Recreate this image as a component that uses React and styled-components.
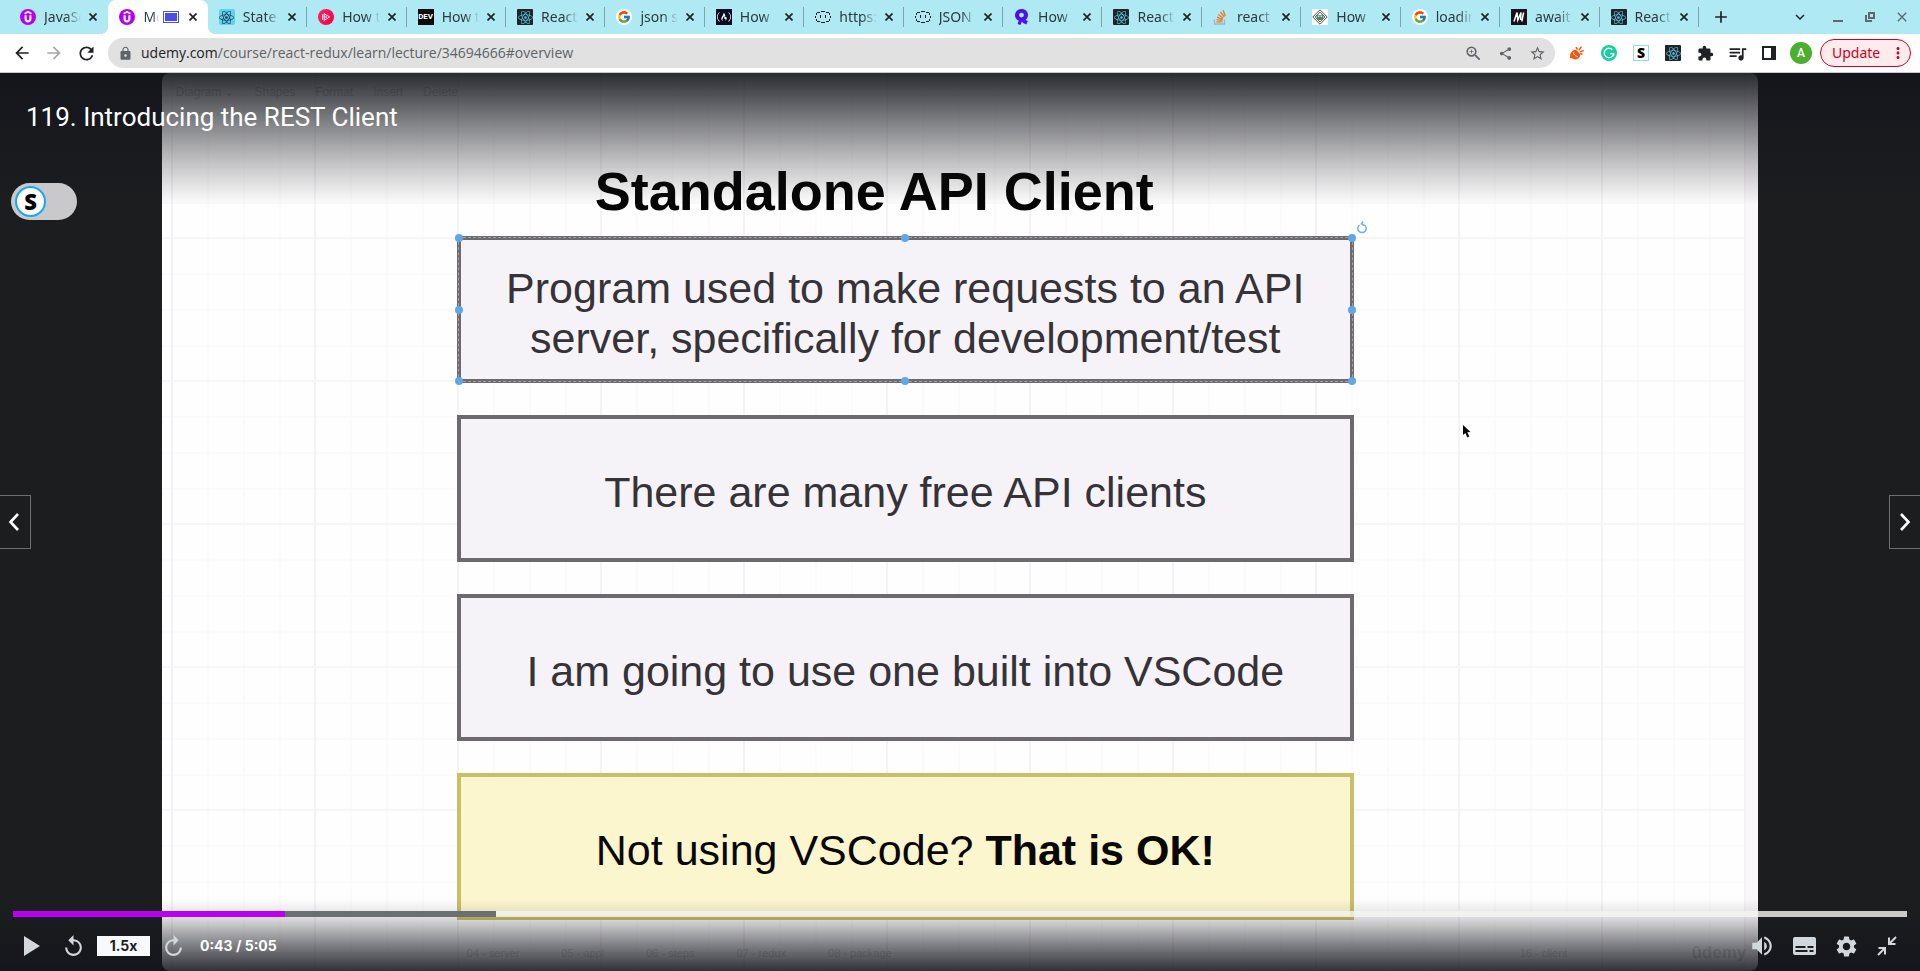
import React from "react";
import styled, { createGlobalStyle, css } from "styled-components";
import {
  MdArrowBack,
  MdArrowForward,
  MdRefresh,
  MdLock,
  MdZoomIn,
  MdShare,
  MdStarBorder,
  MdExtension,
  MdQueueMusic,
  MdClose,
  MdAdd,
  MdExpandMore,
  MdMoreVert,
  MdReplay,
  MdVolumeUp,
  MdSettings,
} from "react-icons/md";
import { FcGoogle } from "react-icons/fc";
import { FaReact, FaFreeCodeCamp } from "react-icons/fa";

const UI_FONT = '"Noto Sans", "Open Sans", sans-serif';
const SLIDE_FONT = '"Liberation Sans", Arial, sans-serif';

const GlobalStyle = createGlobalStyle`
  *, *::before, *::after { box-sizing: border-box; }
  body { margin: 0; background: #1c1d1f; }
  button { margin: 0; padding: 0; border: 0; background: none; color: inherit; font: inherit; cursor: pointer; }
  svg { display: block; flex: none; }
`;

const Page = styled.div`
  display: flex;
  flex-direction: column;
  height: 100vh;
  overflow: hidden;
  font-family: ${UI_FONT};
`;

/* ---------- browser chrome ---------- */

const TabStrip = styled.nav`
  display: flex;
  align-items: stretch;
  flex: none;
  height: 34px;
  padding-left: 9px;
  background: #aee9f4;
`;

const Tabs = styled.div`
  display: flex;
  flex: 1;
  min-width: 0;
`;

const Tab = styled.div`
  position: relative;
  display: flex;
  align-items: center;
  flex: 1 1 0;
  min-width: 0;
  padding: 0 7px 0 11px;
  color: #2b3a3e;
  ${(p) =>
    p.$divided &&
    css`
      &::after {
        content: "";
        position: absolute;
        right: 0;
        top: 7px;
        width: 1px;
        height: 20px;
        background: #7fa3aa;
      }
    `}
  ${(p) =>
    p.$active &&
    css`
      background: #fff;
      border-radius: 8px 8px 0 0;
      &::before,
      &::after {
        content: "";
        position: absolute;
        bottom: 0;
        width: 8px;
        height: 8px;
      }
      &::before {
        left: -8px;
        background: radial-gradient(circle at 0 0, transparent 8px, #fff 8px);
      }
      &::after {
        right: -8px;
        background: radial-gradient(circle at 100% 0, transparent 8px, #fff 8px);
      }
    `}
`;

const TabLabel = styled.a`
  flex: 1;
  min-width: 0;
  margin: 0 4px 0 8px;
  overflow: hidden;
  white-space: nowrap;
  font-size: 14px;
  line-height: 20px;
  color: inherit;
  text-decoration: none;
  mask-image: linear-gradient(to right, #000 60%, transparent);
`;

const Recording = styled.span`
  flex: none;
  width: 16px;
  height: 12px;
  margin-right: 6px;
  border: 1px solid #4a4df0;
  background: #4a4df0;
  box-shadow: inset 0 0 0 1px #fff;
`;

const IconButton = styled.button`
  display: flex;
  align-items: center;
  justify-content: center;
  flex: none;
  width: ${(p) => p.$w || 32}px;
  height: ${(p) => p.$h || 30}px;
  color: ${(p) => p.$color || "#202124"};
`;

const Favicon = styled.span`
  display: flex;
  align-items: center;
  justify-content: center;
  flex: none;
  width: 16px;
  height: 16px;
  overflow: hidden;
  border-radius: ${(p) => p.$radius || 0}px;
  background: ${(p) => p.$bg || "transparent"};
  color: ${(p) => p.$color || "#fff"};
  font: ${(p) => p.$font || `700 9px/16px "Roboto", sans-serif`};
`;

const StripEnd = styled.div`
  display: flex;
  align-items: center;
  flex: none;
  width: 221px;
  padding: 0 2px 0 6px;
  color: #202124;
`;

const Spacer = styled.div`
  flex: 1;
`;

const Toolbar = styled.header`
  display: flex;
  align-items: center;
  flex: none;
  height: 39px;
  padding: 0 9px 0 6px;
  border-bottom: 1px solid #c9c9cb;
  background: #fff;
`;

const AddressBar = styled.form`
  display: flex;
  align-items: center;
  flex: 1;
  min-width: 0;
  height: 30px;
  margin: 0 6px;
  padding: 0 2px 0 10px;
  border-radius: 15px;
  background: #e1e1e1;
  color: #5f6368;
`;

const Address = styled.label`
  position: relative;
  display: grid;
  align-items: center;
  flex: 1;
  min-width: 0;
  margin-left: 8px;
  font-family: "Open Sans", sans-serif;
  font-size: 14px;
  line-height: 20px;
`;

const AddressText = styled.span`
  grid-area: 1 / 1;
  white-space: nowrap;
  pointer-events: none;
  b {
    font-weight: 400;
    color: #202124;
  }
`;

const AddressInput = styled.input`
  grid-area: 1 / 1;
  width: 100%;
  height: 24px;
  padding: 0;
  border: 0;
  outline: 0;
  background: transparent;
  font: inherit;
  color: inherit;
`;

const Avatar = styled.span`
  width: 22px;
  height: 22px;
  border-radius: 11px;
  background: #4caf2f;
  color: #fff;
  font: 500 12px/22px "Roboto", sans-serif;
  text-align: center;
`;

const UpdateButton = styled.button`
  display: flex;
  align-items: center;
  justify-content: space-between;
  flex: none;
  width: 91px;
  height: 28px;
  margin-left: 3px;
  padding: 0 3px 0 11px;
  border: 1px solid #d0021b;
  border-radius: 14px;
  background: #fdebed;
  color: #d0021b;
  font-size: 14px;
  line-height: 20px;
`;

/* ---------- player ---------- */

const Player = styled.main`
  position: relative;
  display: flex;
  justify-content: center;
  flex: 1;
  min-height: 0;
  overflow: hidden;
  background: #1c1d1f;
`;

const Stage = styled.section`
  position: relative;
  display: flex;
  flex-direction: column;
  height: 100%;
  aspect-ratio: 16 / 9;
  overflow: hidden;
  border-radius: 8px;
  border-right: 12px solid #f9f7fa;
  background-color: #fefefe;
  background-image: linear-gradient(to right, #f5f2f6 2px, transparent 2px),
    linear-gradient(to bottom, #f7f5f8 2px, transparent 2px),
    linear-gradient(
      to right,
      transparent 36px,
      #fcfafc 36px 38px,
      transparent 38px 72px,
      #fcfafc 72px 74px,
      transparent 74px 108px,
      #fcfafc 108px 110px,
      transparent 110px
    ),
    linear-gradient(
      to bottom,
      transparent 36px,
      #fcfafc 36px 38px,
      transparent 38px 72px,
      #fcfafc 72px 74px,
      transparent 74px 108px,
      #fcfafc 108px 110px,
      transparent 110px
    );
  background-size: 143px 143px;
  background-position: 9px 21px;
  font-family: ${SLIDE_FONT};
`;

const EditorMenu = styled.div`
  display: flex;
  align-items: center;
  gap: 20px;
  height: 38px;
  padding-left: 14px;
  color: #cfcfcf;
  font-size: 12px;
  line-height: 16px;
`;

const SlideTitle = styled.h1`
  width: 897px;
  margin: 48px 0 13px 295px;
  padding-right: 62px;
  color: #050505;
  font-size: 54px;
  font-weight: 700;
  line-height: 64px;
  text-align: center;
`;

const Notes = styled.div`
  display: flex;
  flex-direction: column;
  gap: 32px;
  width: 897px;
  margin-left: 295px;
`;

const Note = styled.p`
  position: relative;
  display: flex;
  align-items: center;
  justify-content: center;
  height: 147px;
  margin: 0;
  padding-top: 6px;
  border: 4px solid ${(p) => (p.$warn ? "#cabf66" : "#6d6a6f")};
  background: ${(p) => (p.$warn ? "#fcf6cf" : "#f5f3f7")};
  color: ${(p) => (p.$warn ? "#0a0805" : "#353338")};
  font-size: 43px;
  line-height: 50px;
  text-align: center;
`;

const Selection = styled.span`
  position: absolute;
  inset: -3px;
  border: 1px dashed #a3a1a4;
`;

const Handle = styled.span`
  position: absolute;
  left: ${(p) => p.$x};
  top: ${(p) => p.$y};
  width: 8px;
  height: 8px;
  border-radius: 4px;
  background: #5ea8e8;
  transform: translate(-50%, -50%);
`;

const RotateIcon = styled.svg`
  position: absolute;
  right: -17px;
  top: -19px;
`;

const Pointer = styled.svg`
  position: absolute;
  left: 1300px;
  top: 352px;
`;

const CanvasScroll = styled.span`
  position: absolute;
  right: -9px;
  top: 358px;
  width: 6px;
  height: 125px;
  border-radius: 3px;
  background: #dfdde0;
`;

const SheetTabs = styled.div`
  position: absolute;
  left: 0;
  right: 0;
  bottom: 4px;
  display: flex;
  align-items: center;
  gap: 42px;
  padding-left: 305px;
  color: #d6d6d6;
  font-size: 11px;
  line-height: 20px;
  white-space: nowrap;
`;

const LastSheet = styled.span`
  margin-left: auto;
  margin-right: 82px;
`;

const Watermark = styled.span`
  color: #d6d6d6;
  font: 700 17px/28px ${SLIDE_FONT};
`;

const Shade = styled.div`
  position: absolute;
  left: 0;
  right: 0;
  pointer-events: none;
  ${(p) =>
    p.$bottom
      ? css`
          bottom: 0;
          height: 72px;
          background: linear-gradient(
            to top,
            rgba(20, 21, 28, 0.88) 0,
            rgba(20, 21, 28, 0.54) 26px,
            rgba(20, 21, 28, 0.13) 54px,
            transparent
          );
        `
      : css`
          top: 0;
          height: 132px;
          background: linear-gradient(
            to bottom,
            rgba(20, 21, 28, 0.9) 0,
            rgba(20, 21, 28, 0.5) 54px,
            rgba(20, 21, 28, 0.24) 92px,
            transparent
          );
        `}
`;

const LectureTitle = styled.h2`
  position: absolute;
  left: 26px;
  top: 26px;
  margin: 0;
  color: #fff;
  font: 400 26px/36px "Roboto", sans-serif;
  white-space: nowrap;
`;

const ExtensionToggle = styled.button`
  position: absolute;
  left: 11px;
  top: 110px;
  display: flex;
  align-items: center;
  width: 66px;
  height: 37px;
  padding-left: 4px;
  border-radius: 19px;
  background: #c9c8ca;
`;

const Knob = styled.span`
  width: 31px;
  height: 31px;
  border: 2px solid #14a8f5;
  border-radius: 16px;
  background: #fff;
  color: #000;
  font: 800 22px/27px "Open Sans", sans-serif;
  text-align: center;
`;

const SideButton = styled.button`
  position: absolute;
  top: 50%;
  ${(p) => (p.$right ? "right" : "left")}: 0;
  display: flex;
  align-items: center;
  justify-content: center;
  width: 31px;
  height: 54px;
  border: 1px solid #6a6f73;
  ${(p) => (p.$right ? "border-right" : "border-left")}: 0;
  padding-right: ${(p) => (p.$right ? 0 : 2)}px;
  background: #1c1d1f;
  transform: translateY(-50%);
`;

const Controls = styled.div`
  position: absolute;
  left: 0;
  right: 0;
  bottom: 0;
  height: 60px;
  padding: 0 13px;
  color: #d1d7dc;
`;

const Track = styled.div`
  display: flex;
  height: 6px;
  background: rgba(245, 245, 240, 0.8);
`;

const Segment = styled.span`
  height: 6px;
  background: ${(p) => p.$color};
`;

const ControlRow = styled.div`
  display: flex;
  align-items: center;
  height: 58px;
`;

const RateButton = styled.button`
  width: 53px;
  height: 20px;
  margin-right: 4px;
  background: #f7f9fa;
  color: #1c1d1f;
  font: 700 14px/18px "Inter", sans-serif;
  text-align: center;
`;

const Time = styled.span`
  margin-left: 8px;
  color: #fff;
  font: 700 14px/20px "Inter", sans-serif;
  white-space: nowrap;
`;

/* ---------- icons ---------- */

const UdemyIcon = () => (
  <Favicon $bg="#b800f0" $radius={8}>
    <svg width="16" height="16" viewBox="0 0 16 16" fill="none" stroke="#fff" strokeWidth="1.7">
      <path d="M4.6 4.7 8 2.8l3.4 1.9" />
      <path d="M5.6 6.2v3.6c0 3.4 4.8 3.4 4.8 0V6.2" strokeWidth="2.1" />
    </svg>
  </Favicon>
);

const ReactIcon = ({ dark, size = 15 }) => (
  <Favicon $bg={dark ? "#20232a" : "#5cd3f5"} $color={dark ? "#58c4dc" : "#1c3a4a"} $radius={dark ? 1 : 2}>
    <FaReact size={size} />
  </Favicon>
);

const PluralsightIcon = () => (
  <Favicon $bg="linear-gradient(120deg,#ff1f6b,#f5003d)" $radius={8}>
    <svg width="16" height="16" viewBox="0 0 16 16" fill="none" stroke="#fff">
      <path d="M6.2 4.6 11.6 8l-5.4 3.4zM4.6 5.4v5.2" />
      <path d="M8 7v2.2" />
    </svg>
  </Favicon>
);

const GoogleIcon = () => (
  <Favicon $bg="#fff" $radius={8}>
    <FcGoogle size={14} />
  </Favicon>
);

const CampIcon = () => (
  <Favicon $bg="#0a0a23">
    <FaFreeCodeCamp size={14} />
  </Favicon>
);

const BracesIcon = () => (
  <svg width="16" height="16" viewBox="0 0 16 16" fill="none" stroke="#1c1c1c" shapeRendering="crispEdges">
    <path d="M2 3.500h3M6 2.500h4M11 3.500h3M2 12.500h3M6 13.500h4M11 12.500h3" />
    <path d="M1.500 4v2M14.500 4v2M1.500 10v2M14.500 10v2M0 7.500h1M0 8.500h1M15 7.500h1M15 8.500h1" />
    <path d="M5.500 6v3M10.500 6v3" />
  </svg>
);

const RapidIcon = () => (
  <svg width="16" height="16" viewBox="0 0 16 16">
    <path
      fill="#4b10ee"
      fillRule="evenodd"
      d="M7.500 0C11.500 0 14 2.700 14 6c0 2-1 3.800-2.500 4.900l2.300 1.200-1.600 3.500L8.500 13.500 8 12.200 6.400 16 3.600 15l1.200-3.600C2 10.800 1 8.500 1 6.300 1 2.800 3.700 0 7.500 0Zm0 3.700a2.300 2.300 0 1 0 0 4.800 2.300 2.300 0 0 0 0-4.800Z"
    />
  </svg>
);

const OverflowIcon = () => (
  <svg width="16" height="16" viewBox="0 0 16 16" fill="none">
    <path d="M1.500 10.500v4.500h10v-4.500" stroke="#a9b4b8" strokeWidth="1.300" />
    <path
      d="M3.500 12.900h6M3.500 10.600l6 .8M4 8.100l5.700 2.200M5.300 5.400l5 3.800M7.500 3l3.800 4.800M10.200 1.200l2 5.800"
      stroke="#ee7a22"
      strokeWidth="1.300"
    />
  </svg>
);

const DiamondIcon = () => (
  <Favicon $bg="#fff">
    <svg width="16" height="16" viewBox="0 0 16 16" fill="none">
      <path d="M8 .8 15.200 8 8 15.200.8 8z" stroke="#555" strokeWidth="1" />
      <path d="M8 3.200 12.800 8 8 12.800 3.200 8z" stroke="#444" strokeWidth="1" />
      <path d="M4.800 6.200h6.400v2.300C11 10.800 9 11 8 11s-3-.2-3.200-2.500z" fill="#46835a" />
      <path d="M6 7.700h1.400M8.600 7.700H10" stroke="#fff" />
    </svg>
  </Favicon>
);

const MasteringIcon = () => (
  <Favicon $bg="#15141a">
    <svg width="16" height="16" viewBox="0 0 16 16" fill="none" stroke="#fff" strokeWidth="1.500">
      <path d="M3 12.500 6 3.500l.8 7.500L10 3.500 9.600 11M12.600 3.500l-1.800 9" />
    </svg>
  </Favicon>
);

const DevIcon = () => (
  <Favicon $bg="#0a0a0a" $font={`700 8px/16px "Roboto", sans-serif`}>
    DEV
  </Favicon>
);

const PlugIcon = () => (
  <svg width="16" height="16" viewBox="0 0 18 18" fill="#f9560b">
    <path d="M4.500 6.300c1.800-1.700 3.400-1 4.600.3l2.700 2.700c1.700 2.300.5 4.600-1.400 6-2.400 1.500-5.300 1-6.900-.4-.7-.3-1.700.2-2.300-.3-.5-.7 0-1.500.2-2.300-.4-2.300.9-4.300 3.100-6z" />
    <path d="M9.400 5.400 8 2.200M11 6l3-4.200M12.300 7.600l4.300-1.300M12.500 9.600l2.700.8" stroke="#f9560b" strokeWidth="1.700" />
    <path d="M4.800 8.200c.5 2.500 2.300 4.400 5 4.900" stroke="#fff" strokeWidth="1" fill="none" />
  </svg>
);

const GrammarlyIcon = () => (
  <svg width="16" height="16" viewBox="0 0 16 16" fill="none">
    <circle cx="8" cy="8" r="8" fill="#15cf9c" />
    <path d="M11.300 4.700A4.700 4.700 0 1 0 12.600 8.600H9.200M12.600 8.600v2.700" stroke="#fff" strokeWidth="1.400" />
  </svg>
);

const SIcon = styled(Favicon)`
  border: 1px solid #8edcf7;
`;

const SidePanelIcon = () => (
  <svg width="14" height="14" viewBox="0 0 14 14">
    <path fill="#202124" fillRule="evenodd" d="M0 0h14v14H0zM2 2v10h7V2z" />
  </svg>
);

const RestoreIcon = () => (
  <svg width="10" height="10" viewBox="0 0 10 10" fill="none" stroke="#5a6a70" strokeWidth="2">
    <path d="M4 1h5v5H4z" />
    <path d="M1 3v6h6" />
  </svg>
);

const MinimizeIcon = () => (
  <svg width="10" height="10" viewBox="0 0 10 10" fill="#5a6a70">
    <path d="M0 8h10v2H0z" />
  </svg>
);

const TabCloseIcon = () => (
  <svg width="8" height="8" viewBox="0 0 8 8" stroke="currentColor" strokeWidth="1.700">
    <path d="M.5.500l7 7M7.500.500l-7 7" />
  </svg>
);

const Chevron = ({ right }) => (
  <svg width="12" height="18" viewBox="0 0 12 18" fill="none" stroke="#fff" strokeWidth="2.600">
    <path d={right ? "M2 1l7.500 8L2 17" : "M10 1 2.500 9l7.500 8"} />
  </svg>
);

const CaptionIcon = () => (
  <svg width="23" height="18" viewBox="0 0 23 18">
    <rect width="23" height="18" rx="2" fill="#d1d7dc" />
    <path d="M2.500 10h10M14.500 10h6M2.500 14h12M16.500 14h4" stroke="#1c1d1f" strokeWidth="2" />
  </svg>
);

const ExitFullscreenIcon = () => (
  <svg width="20" height="20" viewBox="0 0 20 20" fill="none" stroke="#d1d7dc" strokeWidth="2">
    <path d="M19 1l-7 7M12 1.500V8h6.500" />
    <path d="M1 19l7-7M1.500 12H8v6.500" />
  </svg>
);

const Flipped = styled.span`
  display: flex;
  transform: scaleX(-1);
`;

const tabs = [
  { label: "JavaScript", icon: <UdemyIcon /> },
  { label: "Modern React", icon: <UdemyIcon />, active: true },
  { label: "State", icon: <ReactIcon /> },
  { label: "How to", icon: <PluralsightIcon /> },
  { label: "How to", icon: <DevIcon /> },
  { label: "React", icon: <ReactIcon dark /> },
  { label: "json se", icon: <GoogleIcon /> },
  { label: "How", icon: <CampIcon /> },
  { label: "https:", icon: <BracesIcon /> },
  { label: "JSON", icon: <BracesIcon /> },
  { label: "How", icon: <RapidIcon /> },
  { label: "React", icon: <ReactIcon dark /> },
  { label: "react", icon: <OverflowIcon /> },
  { label: "How", icon: <DiamondIcon /> },
  { label: "loading", icon: <GoogleIcon /> },
  { label: "await", icon: <MasteringIcon /> },
  { label: "React", icon: <ReactIcon dark /> },
];

const handles = [
  ["0", "0"],
  ["50%", "0"],
  ["100%", "0"],
  ["0", "50%"],
  ["100%", "50%"],
  ["0", "100%"],
  ["50%", "100%"],
  ["100%", "100%"],
];

export default function App() {
  return (
    <Page>
      <GlobalStyle />
      <TabStrip>
        <Tabs>
          {tabs.map((tab, i) => (
            <Tab key={i} $active={tab.active} $divided={i > 1}>
              {tab.icon}
              <TabLabel href="#tab">{tab.label}</TabLabel>
              {tab.active && <Recording />}
              <IconButton $w={16} $h={16} aria-label="Close tab">
                <TabCloseIcon />
              </IconButton>
            </Tab>
          ))}
        </Tabs>
        <StripEnd>
          <IconButton aria-label="New tab">
            <MdAdd size={20} />
          </IconButton>
          <Spacer />
          <IconButton $w={44} aria-label="Search tabs">
            <MdExpandMore size={18} />
          </IconButton>
          <IconButton $color="#5a6a70" aria-label="Minimize">
            <MinimizeIcon />
          </IconButton>
          <IconButton aria-label="Restore">
            <RestoreIcon />
          </IconButton>
          <IconButton $color="#5a6a70" aria-label="Close window">
            <MdClose size={16} />
          </IconButton>
        </StripEnd>
      </TabStrip>

      <Toolbar>
        <IconButton aria-label="Back">
          <MdArrowBack size={20} />
        </IconButton>
        <IconButton $color="#a6a7a9" aria-label="Forward">
          <MdArrowForward size={20} />
        </IconButton>
        <IconButton aria-label="Reload">
          <MdRefresh size={21} />
        </IconButton>
        <AddressBar onSubmit={(e) => e.preventDefault()}>
          <MdLock size={15} />
          <Address>
            <AddressText>
              <b>udemy.com</b>/course/react-redux/learn/lecture/34694666#overview
            </AddressText>
            <AddressInput type="text" aria-label="Address" />
          </Address>
          <IconButton type="button" $color="#5f6368" aria-label="Zoom">
            <MdZoomIn size={19} />
          </IconButton>
          <IconButton type="button" $color="#5f6368" aria-label="Share">
            <MdShare size={15} />
          </IconButton>
          <IconButton type="button" $color="#5f6368" aria-label="Bookmark">
            <MdStarBorder size={17} />
          </IconButton>
        </AddressBar>
        <IconButton aria-label="Plug extension">
          <PlugIcon />
        </IconButton>
        <IconButton aria-label="Grammarly">
          <GrammarlyIcon />
        </IconButton>
        <IconButton aria-label="S extension">
          <SIcon $bg="#fff" $color="#000" $font={`800 14px/14px "Open Sans", sans-serif`}>
            S
          </SIcon>
        </IconButton>
        <IconButton aria-label="React Developer Tools">
          <ReactIcon dark />
        </IconButton>
        <IconButton aria-label="Extensions">
          <MdExtension size={17} />
        </IconButton>
        <IconButton aria-label="Media controls">
          <MdQueueMusic size={21} />
        </IconButton>
        <IconButton aria-label="Side panel">
          <SidePanelIcon />
        </IconButton>
        <IconButton aria-label="Profile">
          <Avatar>A</Avatar>
        </IconButton>
        <UpdateButton>
          Update
          <MdMoreVert size={18} />
        </UpdateButton>
      </Toolbar>

      <Player>
        <Stage>
          <EditorMenu>
            <span>Diagram ⌄</span>
            <span>Shapes</span>
            <span>Format</span>
            <span>Insert</span>
            <span>Delete</span>
          </EditorMenu>
          <SlideTitle>Standalone API Client</SlideTitle>
          <Notes>
            <Note>
              Program used to make requests to an API
              <br />
              server, specifically for development/test
              <Selection>
                {handles.map(([x, y]) => (
                  <Handle key={x + y} $x={x} $y={y} />
                ))}
              </Selection>
              <RotateIcon width="10" height="13" viewBox="0 0 10 13" fill="none" stroke="#6fb0ea" strokeWidth="1.500">
                <path d="M2.500 4A4.200 4.200 0 1 0 7.500 4M6 .5 4.500 2.800 7.200 4.500" />
              </RotateIcon>
            </Note>
            <Note>There are many free API clients</Note>
            <Note>I am going to use one built into VSCode</Note>
            <Note $warn>
              <span>
                Not using VSCode? <strong>That is OK!</strong>
              </span>
            </Note>
          </Notes>
          <Pointer width="9" height="13" viewBox="0 0 9 13">
            <path d="M1 0v10l2.400-2 1.900 4.500 2-1-2-4.200L8.500 7z" fill="#0a0a0a" />
          </Pointer>
          <CanvasScroll />
          <SheetTabs>
            <span>04 - server</span>
            <span>05 - appl</span>
            <span>06 - steps</span>
            <span>07 - redux</span>
            <span>08 - package</span>
            <LastSheet>16 - client</LastSheet>
            <Watermark>ûdemy</Watermark>
          </SheetTabs>
        </Stage>

        <Shade />
        <Shade $bottom />
        <LectureTitle>119. Introducing the REST Client</LectureTitle>
        <ExtensionToggle aria-label="Toggle extension">
          <Knob>S</Knob>
        </ExtensionToggle>
        <SideButton aria-label="Previous lecture">
          <Chevron />
        </SideButton>
        <SideButton $right aria-label="Next lecture">
          <Chevron right />
        </SideButton>

        <Controls>
          <Track>
            <Segment $color="#b900f2" style={{ width: "14.36%" }} />
            <Segment $color="#6a6f73" style={{ width: "11.14%" }} />
          </Track>
          <ControlRow>
            <IconButton $w={37} $color="inherit" aria-label="Play">
              <svg width="16" height="20" viewBox="0 0 16 20">
                <path d="M0 0l16 10L0 20z" fill="#d1d7dc" />
              </svg>
            </IconButton>
            <IconButton $w={47} $color="inherit" aria-label="Rewind 5 seconds">
              <MdReplay size={25} />
            </IconButton>
            <RateButton>1.5x</RateButton>
            <IconButton $w={38} $color="inherit" aria-label="Forward 5 seconds">
              <Flipped>
                <MdReplay size={25} />
              </Flipped>
            </IconButton>
            <Time>0:43 / 5:05</Time>
            <Spacer />
            <IconButton $w={42} $color="inherit" aria-label="Volume">
              <MdVolumeUp size={26} />
            </IconButton>
            <IconButton $w={42} $color="inherit" aria-label="Captions">
              <CaptionIcon />
            </IconButton>
            <IconButton $w={42} $color="inherit" aria-label="Settings">
              <MdSettings size={25} />
            </IconButton>
            <IconButton $w={40} $color="inherit" aria-label="Exit fullscreen">
              <ExitFullscreenIcon />
            </IconButton>
          </ControlRow>
        </Controls>
      </Player>
    </Page>
  );
}
